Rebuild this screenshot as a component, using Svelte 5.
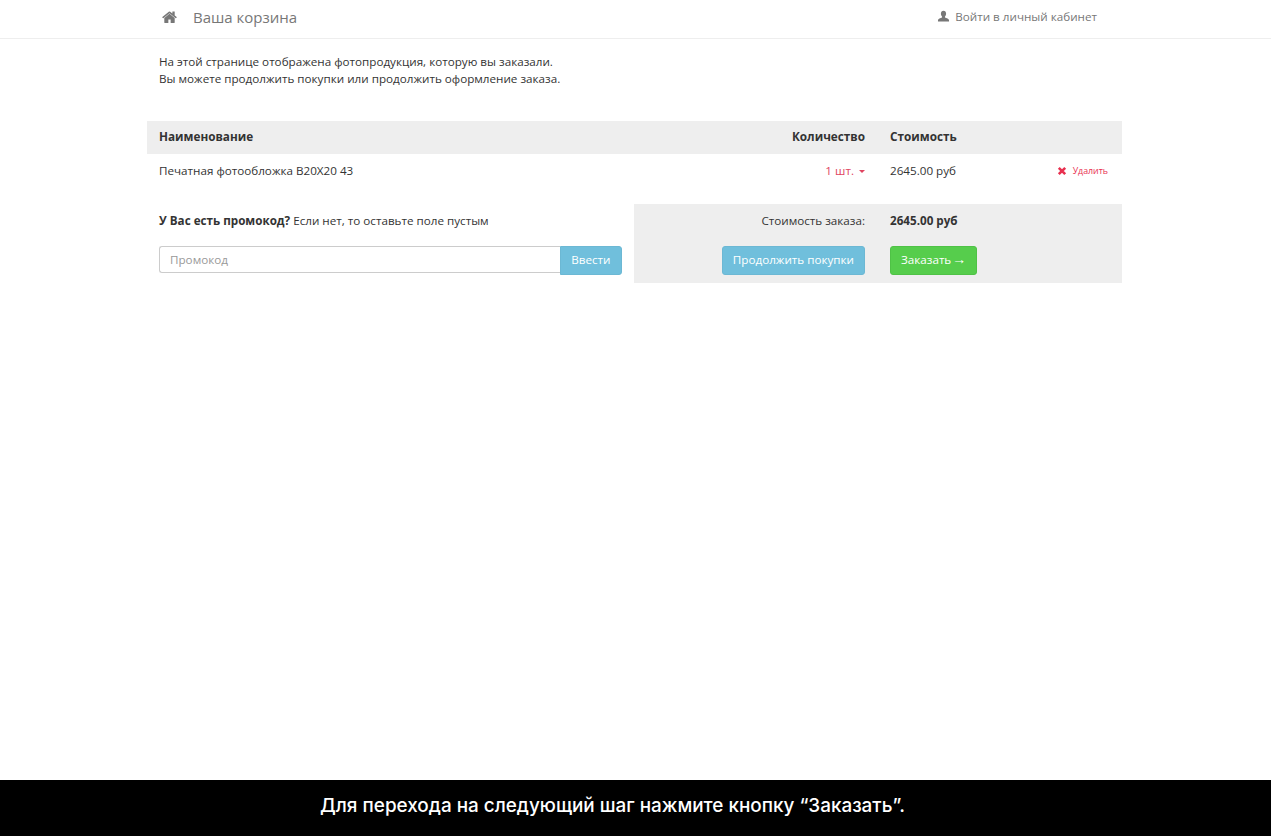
<script>
  const title = 'Ваша корзина';
</script>

<div class="page">
  <header class="topbar">
    <div class="container nav">
      <div class="brand">
        <svg class="home" viewBox="0 0 1664 1408" aria-hidden="true"><path fill="currentColor" d="M1408 768v480q0 26-19 45t-45 19H960V928H704v384H320q-26 0-45-19t-19-45V768q0-1 .5-3t.5-3l575-474 575 474q1 2 1 6zm223-69-62 74q-8 9-21 11h-3q-13 0-21-7L832 221 140 777q-12 8-24 7-13-2-21-11l-62-74q-8-10-7-23.500T37 654L756 55q32-26 76-26t76 26l244 204V64q0-14 9-23t23-9h192q14 0 23 9t9 23v408l219 182q10 8 11 21.500t-7 23.500z"/></svg>
        <span class="title">{title}</span>
      </div>
      <a class="login" href="#login">
        <svg class="user" viewBox="0 0 16 16" aria-hidden="true"><path fill="currentColor" d="M8 1c2 0 3.200 1.500 3.200 3.600 0 1.400-.6 2.700-1.400 3.400v1.200c1.800.8 5 1.300 5 3.300V14H1.200v-1.500c0-2 3.200-2.500 5-3.300V8C5.400 7.300 4.800 6 4.800 4.600 4.800 2.500 6 1 8 1z"/></svg>
        Войти в личный кабинет
      </a>
    </div>
  </header>

  <main class="container content">
    <p class="intro">На этой странице отображена фотопродукция, которую вы заказали.<br />Вы можете продолжить покупки или продолжить оформление заказа.</p>

    <div class="row head">
      <div>Наименование</div>
      <div class="qty">Количество</div>
      <div>Стоимость</div>
      <div></div>
    </div>
    <div class="row item">
      <div>Печатная фотообложка B20X20 43</div>
      <div class="qty red">1 шт. <span class="caret"></span></div>
      <div>2645.00 руб</div>
      <div class="del">
        <svg class="x" viewBox="0 0 10 10" aria-hidden="true"><path d="M1.800 1.800l6.400 6.400M8.200 1.800L1.800 8.200" stroke="currentColor" stroke-width="2.600" fill="none"/></svg>
        <span class="del-text">Удалить</span>
      </div>
    </div>

    <div class="bottom">
      <div class="promo">
        <p><b>У Вас есть промокод?</b> Если нет, то оставьте поле пустым</p>
        <div class="group">
          <input placeholder="Промокод" />
          <button class="btn info joined">Ввести</button>
        </div>
      </div>
      <div class="summary">
        <div class="label">Стоимость заказа:</div>
        <div class="sum">2645.00 руб</div>
        <div class="right"><button class="btn info">Продолжить покупки</button></div>
        <div><button class="btn green">Заказать<span class="arrow">→</span></button></div>
      </div>
    </div>
  </main>

  <footer class="hint">Для перехода на следующий шаг нажмите кнопку “Заказать”.</footer>
</div>

<style>
  :global(body) {
    margin: 0;
    background: #fff;
  }
  .page {
    min-height: 836px;
    display: flex;
    flex-direction: column;
    font-family: "Open Sans", sans-serif;
    font-size: 11.66px;
    line-height: 17px;
    color: #333;
  }
  .container {
    width: 975px;
    margin-left: 147px;
    box-sizing: border-box;
  }
  .topbar {
    height: 39px;
    border-bottom: 1px solid #eee;
    box-sizing: border-box;
  }
  .nav {
    display: flex;
    justify-content: space-between;
    align-items: center;
    height: 33px;
    padding: 0 25px 0 15px;
  }
  .brand {
    display: flex;
    align-items: center;
    color: #777;
  }
  .home {
    width: 15px;
    height: 13px;
    margin: 2px 16px 0 0;
  }
  .title {
    font-size: 15px;
    line-height: 20px;
  }
  .login {
    display: flex;
    align-items: center;
    gap: 5px;
    color: #777;
    text-decoration: none;
  }
  .user {
    width: 13px;
    height: 13px;
  }
  .content {
    flex: 1;
  }
  .intro {
    margin: 14px 0 34px;
    padding-left: 12px;
  }
  .row {
    display: grid;
    grid-template-columns: 487px 244px 125px 1fr;
    padding: 0 0 0 12px;
    align-items: center;
  }
  .head {
    height: 33px;
    box-sizing: border-box;
    padding-bottom: 2px;
    background: #eee;
    font-weight: 700;
    font-size: 11.75px;
  }
  .item {
    height: 33px;
    margin-bottom: 17px;
  }
  .qty {
    text-align: right;
    padding-right: 25px;
  }
  .red {
    color: #e04460;
  }
  .caret {
    display: inline-block;
    width: 0;
    height: 0;
    margin-left: 2px;
    vertical-align: middle;
    border-top: 3px solid currentColor;
    border-left: 3px solid transparent;
    border-right: 3px solid transparent;
  }
  .del {
    display: flex;
    justify-content: flex-end;
    align-items: center;
    gap: 6px;
    padding-right: 14px;
    color: #e8304f;
    font-size: 8.8px;
  }
  .del-text {
    padding-top: 1px;
  }
  .x {
    width: 10px;
    height: 10px;
  }
  .bottom {
    display: grid;
    grid-template-columns: 487px 1fr;
  }
  .promo {
    padding: 0 12px;
  }
  .promo p {
    margin: 8px 0 17px;
  }
  .group {
    display: flex;
    height: 27px;
  }
  input {
    flex: 1;
    min-width: 0;
    box-sizing: border-box;
    border: 1px solid #ccc;
    border-right: 0;
    border-radius: 3px 0 0 3px;
    padding: 0 10px;
    font: inherit;
    outline: none;
  }
  input::placeholder {
    color: #999;
    opacity: 1;
  }
  .btn {
    font: inherit;
    color: #fff;
    border: 1px solid transparent;
    border-radius: 3px;
    padding: 0 10px 2px;
    height: 29px;
    cursor: pointer;
  }
  .info {
    background: #70bfdc;
    border-color: #6cb8d4;
  }
  .joined {
    border-radius: 0 3px 3px 0;
    padding: 0 10.5px 2px;
  }
  .green {
    background: #56cd4c;
    border-color: #4fc246;
  }
  .arrow {
    margin-left: 1px;
    font-family: "Liberation Sans", sans-serif;
    font-size: 14px;
  }
  .summary {
    background: #eee;
    display: grid;
    grid-template-columns: 244px 1fr;
    grid-template-rows: 34px 45px;
    align-items: start;
    height: 79px;
  }
  .label {
    text-align: right;
    padding: 8px 13px 0 0;
  }
  .sum {
    padding: 8px 0 0 12px;
    font-weight: 700;
  }
  .right {
    text-align: right;
    padding: 8px 13px 0 0;
  }
  .summary > div:last-child {
    padding: 8px 0 0 12px;
  }
  .hint {
    height: 56px;
    box-sizing: border-box;
    padding: 0 46px 6px 0;
    background: #000;
    color: #fff;
    display: flex;
    align-items: center;
    justify-content: center;
    font-family: Inter, sans-serif;
    font-size: 18.9px;
    font-weight: 500;
  }
</style>
